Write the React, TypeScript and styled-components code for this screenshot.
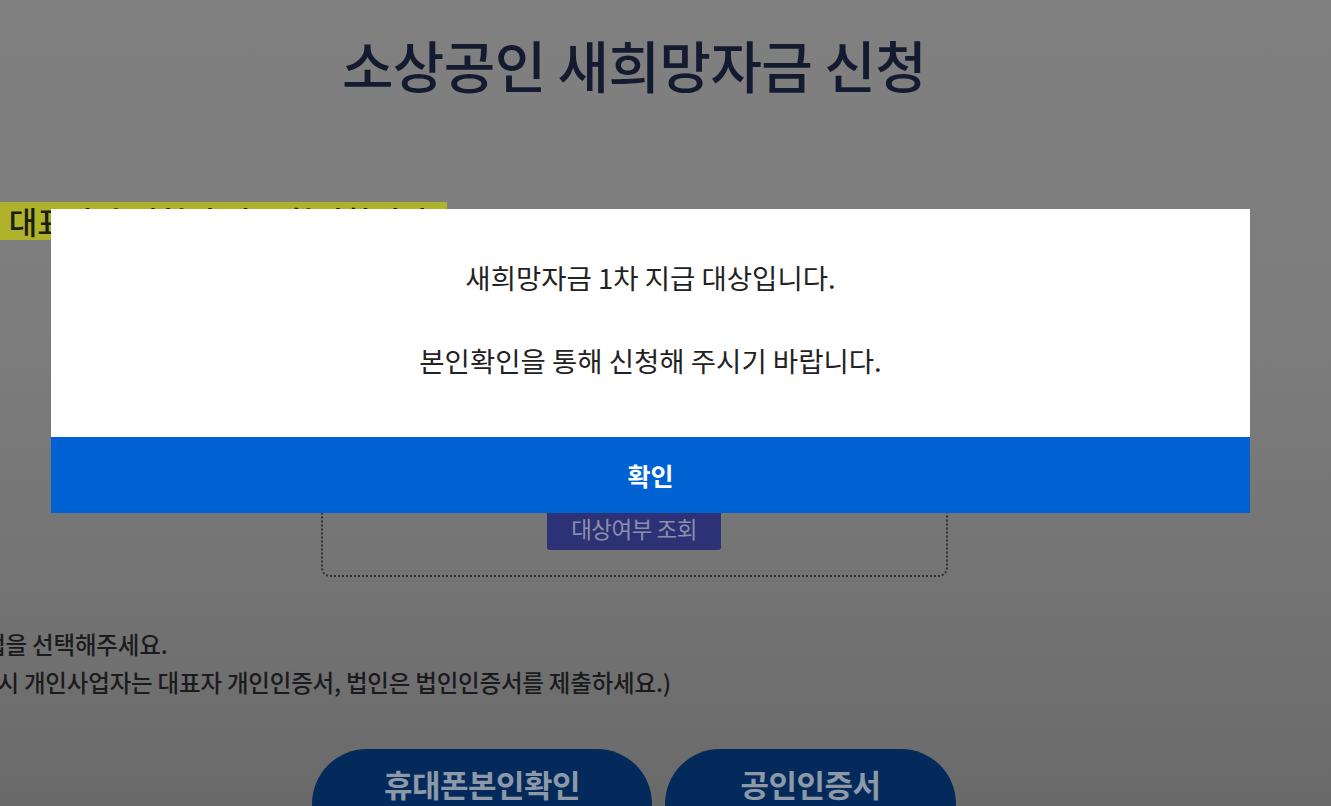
import styled, { createGlobalStyle } from 'styled-components';

const GlobalStyle = createGlobalStyle`
    html, body {
        margin: 0;
        padding: 0;
    }
    body {
        font-family: 'Noto Sans CJK KR', 'Noto Sans', sans-serif;
        overflow: hidden;
    }
`;

const Page = styled.div`
    position: relative;
    width: 1331px;
    height: 806px;
    overflow: hidden;
    background: linear-gradient(180deg, #808080 0%, #7d7d7d 40%, #737373 75%, #6a6a6a 100%);
`;

const Main = styled.main`
    width: 1268px;
    display: flex;
    flex-direction: column;
    align-items: center;
`;

const Title = styled.h1`
    margin: 24px 0 0;
    font-size: 56px;
    font-weight: 500;
    letter-spacing: -0.6px;
    line-height: 80px;
    color: #141a2f;
`;

const HighlightRow = styled.div`
    align-self: flex-start;
    margin: 98px 0 0 -44px;
`;

const Highlight = styled.span`
    display: inline-block;
    padding: 0 18px 0 8px;
    height: 38px;
    line-height: 38px;
    font-size: 31px;
    font-weight: 500;
    color: #1a1c0c;
    background: #afb22b;
`;

const LookupBox = styled.section`
    margin-top: 48px;
    width: 627px;
    height: 289px;
    box-sizing: border-box;
    border: 2px dotted #2e3036;
    border-radius: 9px;
    display: flex;
    flex-direction: column;
    justify-content: flex-end;
    align-items: center;
    padding-bottom: 25px;
`;

const LookupButton = styled.button`
    width: 174px;
    height: 44px;
    border: none;
    border-radius: 3px;
    background: #2d3175;
    color: #8c90aa;
    font-family: inherit;
    font-size: 22.5px;
    letter-spacing: -0.5px;
    line-height: 44px;
    padding: 0;
`;

const Notice = styled.div`
    align-self: flex-start;
    margin: 48px 0 0 -128px;
    font-size: 23.5px;
    font-weight: 500;
    line-height: 38px;
    color: #1b1b1d;
    letter-spacing: -0.2px;
`;

const NoticeLine = styled.p`
    margin: 0;
    white-space: nowrap;
`;

const AuthRow = styled.div`
    display: flex;
    gap: 13px;
    margin-top: 48px;
`;

const AuthButton = styled.button<{ wide?: boolean }>`
    width: ${({ wide }) => (wide ? '340px' : '291px')};
    height: 110px;
    border: none;
    border-radius: 56px;
    background: #032a5b;
    color: #8d98a8;
    font-family: inherit;
    font-size: 31px;
    font-weight: 700;
    letter-spacing: -0.5px;
    display: flex;
    justify-content: center;
    align-items: flex-start;
    padding: 12px 0 0;
`;

const Overlay = styled.div`
    position: absolute;
    inset: 0;
    padding: 209px 0 0 51px;
`;

const Modal = styled.div`
    width: 1199px;
    background: #ffffff;
    display: flex;
    flex-direction: column;
`;

const ModalBody = styled.div`
    display: flex;
    flex-direction: column;
    align-items: center;
    gap: 45px;
    padding: 49px 0 58px;
`;

const Message = styled.p`
    margin: 0;
    font-size: 27.5px;
    line-height: 38px;
    color: #222222;
`;

const ConfirmButton = styled.button`
    height: 76px;
    border: none;
    background: #0062d2;
    color: #ffffff;
    font-family: inherit;
    font-size: 25px;
    font-weight: 700;
    padding: 0;
`;

const App = () => {
    return (
        <Page>
            <GlobalStyle />
            <Main>
                <Title>소상공인 새희망자금 신청</Title>
                <HighlightRow>
                    <Highlight>나. 대표자가 신청인 경우 확인합니다</Highlight>
                </HighlightRow>
                <LookupBox>
                    <LookupButton>대상여부 조회</LookupButton>
                </LookupBox>
                <Notice>
                    <NoticeLine>본인확인 방법을 선택해주세요.</NoticeLine>
                    <NoticeLine>(인증서 선택 시 개인사업자는 대표자 개인인증서, 법인은 법인인증서를 제출하세요.)</NoticeLine>
                </Notice>
                <AuthRow>
                    <AuthButton wide>휴대폰본인확인</AuthButton>
                    <AuthButton>공인인증서</AuthButton>
                </AuthRow>
            </Main>
            <Overlay>
                <Modal role='dialog'>
                    <ModalBody>
                        <Message>새희망자금 1차 지급 대상입니다.</Message>
                        <Message>본인확인을 통해 신청해 주시기 바랍니다.</Message>
                    </ModalBody>
                    <ConfirmButton>확인</ConfirmButton>
                </Modal>
            </Overlay>
        </Page>
    );
};

export default App;
